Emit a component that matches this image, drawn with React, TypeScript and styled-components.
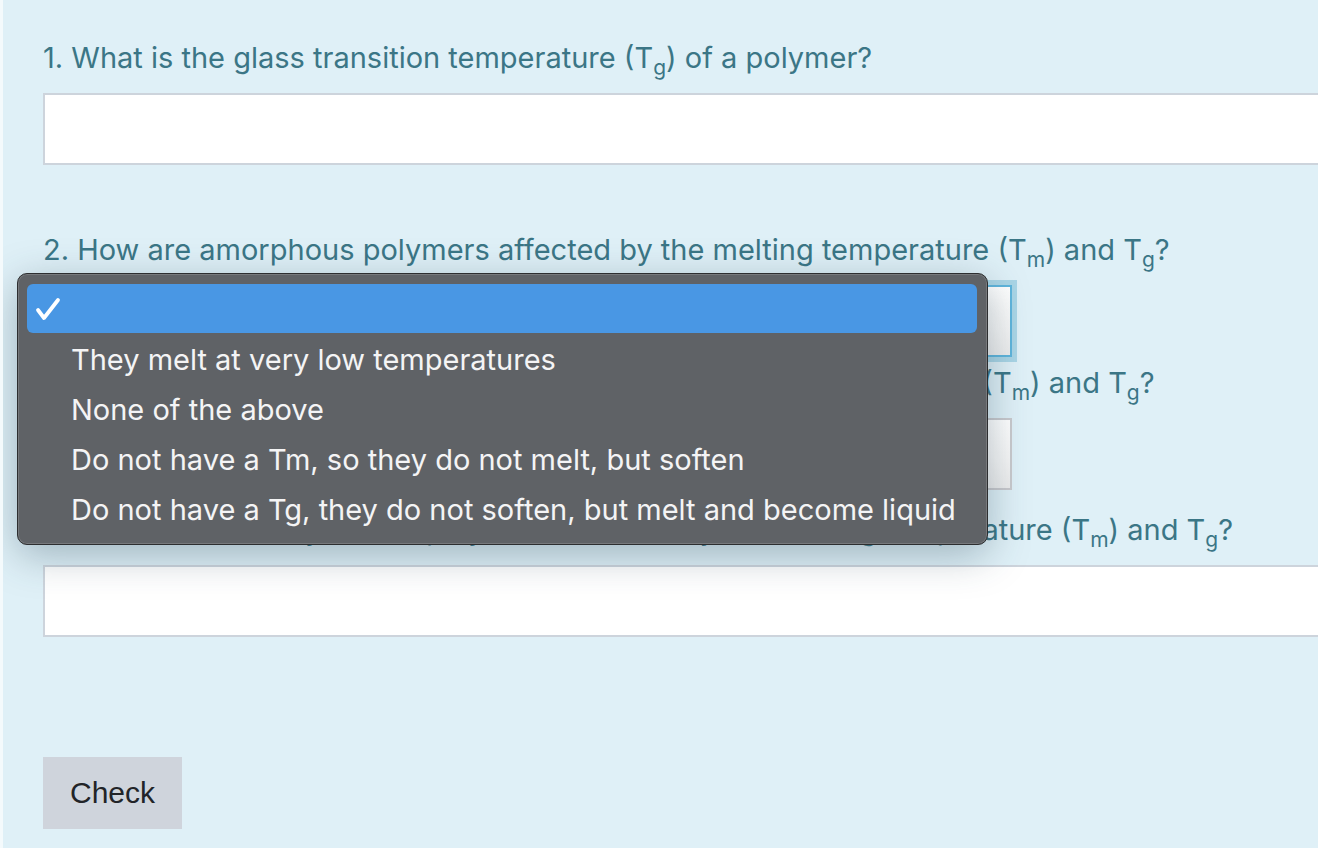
import React from "react";
import styled, { createGlobalStyle, css } from "styled-components";

const GlobalStyle = createGlobalStyle`
  html, body { margin: 0; padding: 0; background: #f4fafc; overflow: hidden; }
  body { width: 1318px; height: 848px; }
`;

const Panel = styled.div`
  position: relative;
  margin-left: 3px;
  height: 848px;
  box-sizing: border-box;
  background: #dff0f7;
  padding: 40px 0 0 40px;
  overflow: hidden;
  font-family: Inter, "Noto Sans", sans-serif;
`;

const Question = styled.div<{ $gapTop?: number }>`
  margin-top: ${(p) => p.$gapTop ?? 0}px;
  font-size: 29px;
  line-height: 36px;
  color: #3b7686;
  white-space: nowrap;
`;

const Sub = styled.sub`
  font-size: 21px;
  line-height: 0;
  vertical-align: -7px;
`;

const TextInput = styled.div`
  margin-top: 17px;
  width: 1320px;
  height: 72px;
  box-sizing: border-box;
  border: 2px solid #cdd4dc;
  background: #ffffff;
`;

const Select = styled.div<{ $focused?: boolean }>`
  margin-top: 17px;
  width: 969px;
  height: 72px;
  box-sizing: border-box;
  background: linear-gradient(180deg, #ffffff 0%, #f6f6f6 60%, #ededed 100%);
  border: 2px solid #c9c9cd;
  ${(p) =>
    p.$focused &&
    css`
      border-color: #5fb5dc;
      box-shadow: 0 0 0 5px #a9d5e6;
    `}
`;

const CheckButton = styled.button`
  margin-top: 120px;
  width: 139px;
  height: 72px;
  border: none;
  background: #cfd4dc;
  color: #222428;
  font-family: "Liberation Sans", Arial, sans-serif;
  font-size: 30px;
  padding: 0;
  display: flex;
  align-items: center;
  justify-content: center;
`;

const Menu = styled.div`
  position: absolute;
  left: 14px;
  top: 273px;
  width: 971px;
  box-sizing: border-box;
  padding: 10px 10px 10px 9px;
  background: #5f6266;
  border: 1px solid #2d2e30;
  border-radius: 10px;
  box-shadow: inset 0 0 0 1px #77797c, 0 10px 40px rgba(40, 70, 85, 0.35);
  display: flex;
  flex-direction: column;
`;

const MenuItem = styled.div<{ $selected?: boolean }>`
  height: 50px;
  display: flex;
  align-items: center;
  padding-left: 44px;
  position: relative;
  border-radius: 6px;
  font-family: Inter, "Noto Sans", sans-serif;
  font-size: 29px;
  color: #f4f4f5;
  white-space: nowrap;
  ${(p) =>
    p.$selected &&
    css`
      background: #4997e4;
      height: 49px;
      margin-bottom: 1px;
    `}
`;

const CheckMark = styled.svg`
  position: absolute;
  left: 8px;
  top: 13px;
  width: 26px;
  height: 24px;
  overflow: visible;
`;

const options = [
  "They melt at very low temperatures",
  "None of the above",
  "Do not have a Tm, so they do not melt, but soften",
  "Do not have a Tg, they do not soften, but melt and become liquid",
];

export default function App() {
  return (
    <>
      <GlobalStyle />
      <Panel>
        <Question>
          1. What is the glass transition temperature (T<Sub>g</Sub>) of a polymer?
        </Question>
        <TextInput />

        <Question $gapTop={67}>
          2. How are amorphous polymers affected by the melting temperature (T<Sub>m</Sub>) and T<Sub>g</Sub>?
        </Question>
        <Select $focused />

        <Question $gapTop={8}>
          3. How are crystalline polymers affected by the melting temperature (T<Sub>m</Sub>) and T<Sub>g</Sub>?
        </Question>
        <Select />

        <Question $gapTop={22}>
          4. How are semi-crystalline polymers affected by the melting temperature (T<Sub>m</Sub>) and T<Sub>g</Sub>?
        </Question>
        <TextInput />

        <CheckButton>Check</CheckButton>

        <Menu>
          <MenuItem $selected>
            <CheckMark viewBox="0 0 26 24">
              <polyline
                points="3,13 9,21 23,3"
                fill="none"
                stroke="#ffffff"
                strokeWidth="3.8"
                strokeLinecap="round"
                strokeLinejoin="round"
              />
            </CheckMark>
          </MenuItem>
          {options.map((o) => (
            <MenuItem key={o}>{o}</MenuItem>
          ))}
        </Menu>
      </Panel>
    </>
  );
}
